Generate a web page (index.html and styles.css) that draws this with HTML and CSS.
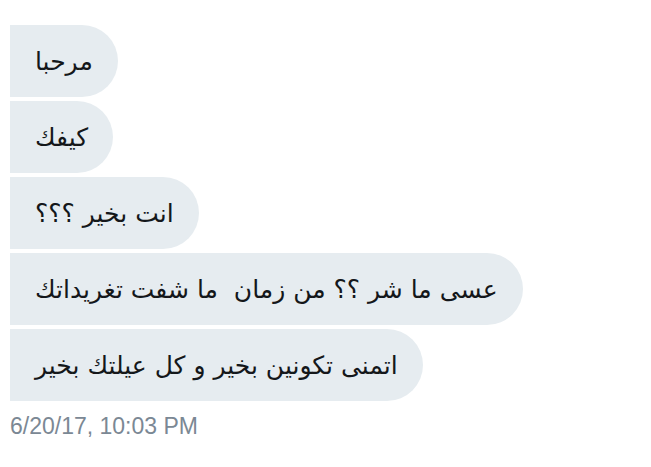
FILE: index.html
```html
<!DOCTYPE html>
<html lang="ar">
<head>
  <meta charset="UTF-8" />
  <meta name="viewport" content="width=device-width, initial-scale=1.0"/>
  <title>Messages</title>
  <link rel="stylesheet" href="styles.css">
</head>
<body>
  <main class="thread">
    <div class="bubble" dir="rtl">مرحبا</div>
    <div class="bubble" dir="rtl">كيفك</div>
    <div class="bubble" dir="rtl">انت بخير ؟؟؟</div>
    <div class="bubble" dir="rtl">عسى ما شر ؟؟ من زمان&nbsp; ما شفت تغريداتك</div>
    <div class="bubble" dir="rtl">اتمنى تكونين بخير و كل عيلتك بخير</div>
    <p class="stamp">6/20/17, 10:03 PM</p>
  </main>
</body>
</html>
```

FILE: styles.css
```css
body {
  margin: 0;
  padding: 0;
  background: #fff;
  font-family: "DejaVu Sans", "Noto Sans", sans-serif;
}

.thread {
  display: flex;
  flex-direction: column;
  align-items: flex-start;
  gap: 4px;
  padding: 25px 0 0 10px;
}

.bubble {
  display: flex;
  align-items: center;
  height: 72px;
  box-sizing: border-box;
  padding: 0 25px;
  background: #e6ecf0;
  border-radius: 0 36px 36px 0;
  color: #14171a;
  font-size: 25px;
  white-space: nowrap;
}

.stamp {
  margin: 8px 0 0;
  font-family: "Liberation Sans", Arial, sans-serif;
  font-size: 23px;
  color: #7b8894;
}
```
